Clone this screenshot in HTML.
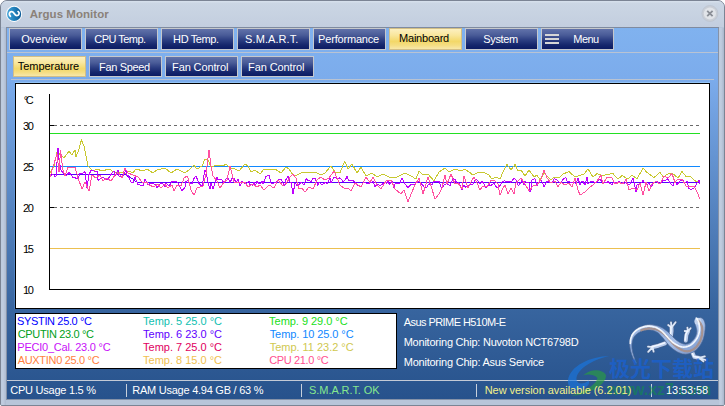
<!DOCTYPE html>
<html><head><meta charset="utf-8"><title>Argus Monitor</title>
<style>
html,body{margin:0;padding:0;background:#fff;}
body{width:725px;height:406px;overflow:hidden;position:relative;font-family:"Liberation Sans","Noto Sans CJK SC",sans-serif;font-size:11px;}
#win{position:absolute;left:0;top:0;width:723px;height:404px;border:1px solid #7b8494;border-radius:7px 7px 2px 2px;background:#b7c5d9;overflow:hidden;}
#title{position:absolute;left:0;top:0;width:723px;height:26px;background:linear-gradient(#d5dfeb 0,#d5dfeb 1px,#cbd6e4 2px,#c3cedf 26px);}
#tline{position:absolute;left:5px;top:26px;width:713px;height:1px;background:#7f8ba0;}
#client{position:absolute;left:6px;top:27px;width:711px;height:371px;background:linear-gradient(#80b2ef 0px,#7cacec 50px,#38659f 279px,#27528c 371px);}
#client:before{content:"";position:absolute;left:-1px;top:0;width:1px;height:372px;background:#8592a8;}
#client:after{content:"";position:absolute;left:711px;top:0;width:1px;height:372px;background:#8592a8;}
#fl{position:absolute;left:0;top:27px;width:5px;height:378px;background:linear-gradient(90deg,#bccadd,#c0cde0 40%,#aebbd0);}
#fr{position:absolute;left:718px;top:27px;width:5px;height:378px;background:linear-gradient(90deg,#bccadd,#c0cde0 40%,#aab7cc);}
#cbot{position:absolute;left:5px;top:398px;width:713px;height:1px;background:#8592a8;}
.sep{position:absolute;left:7px;width:711px;height:1px;background:#b9c3d3;}
.btn{position:absolute;width:71px;height:19px;border:1px solid #c6c8cc;background:linear-gradient(#6172aa 0%,#4a5c98 30%,#2c3e82 55%,#15266c 80%,#0b1b64 100%);}
.btn.tall{height:20px;}
.btn.act{background:linear-gradient(#fcf0c0 0%,#f9e79e 30%,#f3d868 62%,#f5de84 82%,#f8e8aa 100%);border-color:#d2be86;}
.hb{position:absolute;left:3px;top:5px;width:14px;height:2px;background:#d6d6d6;box-shadow:0 4px 0 #d6d6d6,0 8px 0 #d6d6d6;}
#chart{position:absolute;left:15px;top:83px;width:693px;height:224px;border:1px solid #000;background:#fff;box-shadow:0 -1px 0 rgba(165,215,255,.55),-1px 0 0 rgba(110,175,255,.3);}
#legend{position:absolute;left:15px;top:313px;width:380px;height:54px;border:1px solid #000;background:#fff;}
.t{position:absolute;line-height:13px;white-space:nowrap;}
.bar{position:absolute;top:384px;width:1px;height:13px;background:#c8d0dc;}
#wm{position:absolute;left:609px;top:354px;font-size:21px;font-weight:bold;color:rgba(24,98,215,.7);white-space:nowrap;line-height:26px;letter-spacing:0px;font-family:"Noto Sans CJK SC",sans-serif;}
#wm2{position:absolute;left:607px;top:382px;font-size:16px;font-weight:bold;color:rgba(12,150,64,.5);white-space:nowrap;line-height:16px;}
svg{position:absolute;left:0;top:0;}
</style></head><body>
<div id="win">
<div id="title"></div>
<div id="tline"></div>
<div id="client"></div>
<div id="fl"></div><div id="fr"></div>
<div id="cbot"></div>
</div>
<div class="sep" style="top:52px"></div>
<div class="sep" style="top:79px;left:11px;width:703px"></div>
<div class="sep" style="top:380px;background:#c3cad6"></div>
<div class="btn tall" style="left:9px;top:28px"></div>
<div class="btn tall" style="left:85px;top:28px"></div>
<div class="btn tall" style="left:161px;top:28px"></div>
<div class="btn tall" style="left:237px;top:28px"></div>
<div class="btn tall" style="left:313px;top:28px"></div>
<div class="btn tall act" style="left:389px;top:28px"></div>
<div class="btn tall" style="left:465px;top:28px"></div>
<div class="btn tall" style="left:541px;top:28px"><i class="hb"></i></div>

<div class="btn act" style="left:13px;top:56px"></div>
<div class="btn" style="left:89px;top:56px"></div>
<div class="btn" style="left:165px;top:56px"></div>
<div class="btn" style="left:241px;top:56px"></div>

<div id="chart"></div>
<div id="legend"></div>
<div class="bar" style="left:126px"></div>
<div class="bar" style="left:301px"></div>
<div class="bar" style="left:476px"></div>
<div class="bar" style="left:651px"></div>
<svg width="725" height="406" viewBox="0 0 725 406">
<defs>
<linearGradient id="ic" x1="0" y1="0" x2="1" y2="0"><stop offset="0" stop-color="#45a4d8"/><stop offset="0.5" stop-color="#2282bc"/><stop offset="1" stop-color="#0d5a96"/></linearGradient>
<linearGradient id="chrome" x1="0" y1="0" x2="1" y2="1"><stop offset="0" stop-color="#cfdcf0"/><stop offset="0.3" stop-color="#88a8dc"/><stop offset="0.55" stop-color="#a9c2ea"/><stop offset="0.8" stop-color="#7f9cd0"/><stop offset="1" stop-color="#b8c8e2"/></linearGradient>
</defs>
<!-- app icon -->
<circle cx="14.1" cy="13.9" r="8.05" fill="#fff"/>
<circle cx="14.1" cy="13.9" r="7.1" fill="url(#ic)"/>
<path d="M10.4 16.3 C8.4 14.8 9.3 11.5 11.9 11.7 C14.6 11.9 14.2 15.7 16.9 15.6 C19.5 15.5 19.7 12.6 18.1 11.6" fill="none" stroke="#fff" stroke-width="1.8" stroke-linecap="round"/>
<!-- close -->
<circle cx="709.9" cy="13.5" r="8" fill="#c9ced6" stroke="#bcc4d0" stroke-width="0.8"/>
<circle cx="709.9" cy="13.5" r="6.1" fill="#e1e4e9"/>
<path d="M707.2 10.8 L712.6 16.2 M712.6 10.8 L707.2 16.2" stroke="#8a8e96" stroke-width="1.8"/>
<!-- axes -->
<g shape-rendering="crispEdges">
<rect x="49" y="94" width="1" height="196" fill="#000"/>
<rect x="49" y="289" width="651" height="1" fill="#000"/>
<rect x="50" y="125" width="4" height="1" fill="#000"/>
<rect x="50" y="207" width="4" height="1" fill="#000"/>
<line x1="54" y1="125.5" x2="700" y2="125.5" stroke="#6a6a6a" stroke-dasharray="3 3"/>
<line x1="54" y1="207.5" x2="700" y2="207.5" stroke="#6a6a6a" stroke-dasharray="3 3"/>
<rect x="50" y="133" width="650" height="1" fill="#22e022"/>
<rect x="50" y="248" width="650" height="1" fill="#ecc050"/>
<rect x="50" y="166" width="650" height="1" fill="#1088ff"/>
</g>
<g shape-rendering="crispEdges" fill="none" stroke-width="1">
<polyline points="50,173 54,166 57,152 61,155 64,158 69,151 72,155 75,150 76,157 79,149 81.4,140 84,146 86,156 88,166 93,171 97,169 102,171 109,169 114,172 121,172 125,174 129,171 133,173 136,169 143,171 147,169 153,173 157,170 165,168 171,173 177,169 185,173 189,170 194,165 197,169 202,166 205,159 208,160 211,167 217,165 223,166 226,164 230,168 235,169 239,171 245,164 248,166 251,172 255,170 260,174 264,169 269,170 275,169 281,173 286,167 289,169 293,175 297,175 303,172 309,173 315,172 321,175 325,173 331,166 335,172 340,173 343,165 345,161.6 348,169 352,164 357,173 361,167 366,176 372,173 377,177 383,174 389,177 397,177 405,173 411,176 416,179 419,171 423,175 428,174 434,181 439,172 445,168 449,172 455,169 461,171 465,169 469,172 473,175 477,173 483,172 489,175 492,179 496,177 500,179 503,172 507,164.4 511,170 515,164.4 518,171 521,170 525,176 529,170 534,177 537,175 540,180 544,173 551,180 554,177 559,178 563,174 569,171.6 575,177 581,175 584,174 588,169 593,177 597,173.6 602,175.6 608,174.4 613,173.6 618,179 622,175.6 628,179 632,175 637,179 643,168 647,172.4 654,177.6 660,172 663,177 668,174 672,173 678,178 682,171.6 686,176.4 691,177 696,181.6 700,182.4" stroke="#c8c830"/>
<polyline points="50,174.4 125,174.4 127,176 129,176 131,178 133,179 135,181 138,182.4 700,182.4" stroke="#5a00ff"/>
<polyline points="50,173.7 51,175.5 52,175.3 53,173.7 55,176.8 56,176 58,148 59,160 61,170 62,171.4 65,174.9 67,175.2 69,171.9 71,175 73,177.3 75,177.6 77,179 78,178.6 80,172.9 82,173.9 85,171.7 87,188 89,174.5 91,170.6 92,170 94,171.2 97,171.4 98,180.3 101,178 104,177.9 107,179.5 109,177.4 111,174.4 114,171.1 115,176.4 118,169.9 119,176.4 122,176.7 124,174.2 126,169.6 127,175.7 128,175.4 131,181.9 133,182.5 135,177.2 138,184.5 139,184.6 141,185.5 143,185.8 145,179.1 148,185 151,183.1 153,183.6 155,184.2 157,188 159,185 161,183.2 163,184.1 165,186.9 166,183 169,186.3 172,181.3 175,181 178,182.6 179,185.2 182,190.5 184,188.4 185,187 186,181.3 188,180.6 189,183.3 192,183.5 194,178.5 196,176 199,183.5 202,186.4 205,170 206,172 208,182.3 210,189 211,183 213,188.8 215,182.8 217,177.2 218,179.7 220,179.4 222,180.1 224,182.9 226,179.1 228,178.1 230,182.5 232,178.5 234,178.4 235,180.5 236,182.4 238,179.5 240,186 242,181.6 244,183.1 247,183.3 249,181.2 250,184.5 253,185.2 254,182.2 255,186.2 257,181.5 260,184.2 262,181.3 263,184.1 266,176.5 269,174.9 271,183.1 273,183.3 276,182.7 278,179.9 281,179.1 283,182.9 284,185.3 285,184.8 286,179.4 288,176.4 290,182.1 291,182.3 293,194 295,183.1 297,185.4 298,185.6 301,182.4 304,184.9 306,178.7 308,180.4 311,181.5 313,178.6 315,178 317,182.9 318,185.4 319,182.2 322,185.1 323,184.1 325,182.5 327,183.6 330,178 331,183.1 334,176.9 336,177.9 338,178.6 340,177.8 343,181.5 345,180.4 347,176.5 349,180.8 350,180.6 353,180.7 355,182.1 358,185.7 359,185.5 361,187.1 363,182.9 365,182.6 368,183.9 370,183 373,181.5 375,186.9 377,183.9 380,185.6 383,183.6 385,182.2 387,183.2 388,181.2 389,184.4 392,181.4 393,185.2 394,188.1 395,184.2 396,183.1 398,183.4 400,183 402,177.8 405,184 408,187.8 410,185.3 412,184 415,184.7 416,182.1 417,182.6 419,181.5 420,181.9 421,183.5 423,185.6 425,188 427,186.8 428,185.3 430,183.4 432,184.4 434,181.5 437,181.7 439,181.5 441,186.7 442,188.3 444,185.2 447,183.6 450,185.7 453,178.5 455,179.3 457,183.5 459,182.6 462,189.8 464,184.9 465,187.3 467,186.2 470,184.5 473,184.2 475,179.9 476,179.1 479,181.9 480,184.1 482,181.5 484,183.8 486,188.2 488,185.9 490,184.8 491,185.5 494,182.9 496,186.4 497,188 499,187.2 502,182.1 504,180.9 506,181.1 508,181.1 511,182.2 514,178.2 516,180 518,184.9 519,185.3 522,179.9 524,185.1 525,181.1 527,182.5 529,182.8 530,192 531,190 532,180.1 535,178.7 537,185.6 538,183.8 539,182.9 540,179.6 542,181.7 544,186.5 547,181.5 550,182.1 552,182.7 554,178.9 555,179.1 557,179.7 559,182.2 561,182.4 562,181 564,178.2 566,177.9 567,181.2 569,181.5 572,183.1 573,182.4 576,183.4 578,178.4 580,184.6 581,182 583,181.5 585,185.3 587,177 588,183.7 591,181.1 594,182.1 597,182.3 600,178.9 603,183.3 605,181.8 607,183.1 608,181.6 611,184.2 612,184.7 613,182.7 615,182.5 618,183.4 619,181 621,184 622,182.9 624,183.4 626,182.8 628,184.6 630,183.9 633,178.5 634,182.2 636,192 637,185 640,184.7 642,182 643,180.6 645,183 647,185 649,183.3 651,187 654,183 657,180.8 658,182.5 660,183.8 663,180.2 665,180.6 668,178.8 670,182.4 671,183.9 673,186 675,180.6 677,185.2 678,183.5 681,180.2 683,179.8 684,183 687,181.5 689,188.7 691,189.6 694,188.3 697,183.1 699,180.5 700,183.5" stroke="#c000ff"/>
<polyline points="50,177 57,154 59,172 60.6,150 62.6,169 65,176 68,167 75,167 78,178 82,189 85,182 89,191 92,175 96,178 100,175 103,181 107,178 111,181 115,175 119,173 122,178 125,168 128,173 133,175 138,177 142,182 147,182.4 149,185 154,187 158,184 161,188 165,184 168,188 172,185 174,191 177,185 181,186 184,178 187,176 188,178 191,190 194,195 197,188 203,186 206,174 209,150 211,166 213,176 217,181 220,188 224,182 227,180 230,166 234,182 239,182.4 245,182.4 248,187 253,184 257,187 260,185 264,190 269,185 274,188 278,180 283,186 287,182.4 290,177 293,174 296,178 299,189 302,188 305,192 309,187 313,189 317,180 321,177 325,180 329,178 334,171 337,178 340,185 345,189 348,188 351,191 355,183 361,187 366,177 370,182.4 373,177 377,185 381,189 386,181 391,180 395,189 401,194 404,190 408,202 411,194 415,185 419,178 423,194 428,177 431,186 435,199 439,194 442,188 445,175 447,184 451,174 455,184 458,183 462,189 464,176 468,188 471,182 474,177 477,183 480,190 483,186 487,187 491,180 495,181 498,184 500,195 503,188 505,185 508,194 511,188 514,194 516,183 521,178 525,184 529,191 533,186 537,185 541,179 544,170 547,178 551,183 555,181 558,187 561,182 565,185 569,183 572,187 575,178 578,190 580,195 585,192 589,188 593,185 597,181 601,175 603,184 607,177 612,178 615,184 619,182.4 623,184 626,179 629,190 633,188 637,190 640,183 643,195 646,182.4 649,191 652,184 656,181.6 660,184 664,176 668,178 672,173.6 675,182.4 678,179 682,179 686,186 690,187 694,186 697,192 700,199" stroke="#ff50a0"/>
</g>
<!-- lizard -->
<g stroke-linecap="round" stroke-linejoin="round" fill="none">
<g stroke="#47608a" stroke-width="5"><path d="M671 336 L671.6 331 L671.5 327.6"/><path d="M685.8 340.6 L686.4 335 L688 331.4"/><path d="M665 343.4 L658.2 345.8 L652.6 347.2"/><path d="M692.2 352 L694.4 357 L699 357.9"/></g>
<g stroke="#47608a" stroke-width="2.8"><path d="M671.5 327.6 L668.2 325 M671.5 327.6 L671 322.4 M671.5 327.6 L675.6 322.2"/><path d="M688 331.4 L684.8 331 M688 331.4 L687.4 327.6 M688 331.4 L690.6 328.2"/><path d="M652.6 347.2 L648 346.6 M652.6 347.2 L648.2 351.8 M652.6 347.2 L653.6 351.6"/><path d="M699 357.9 L704.8 356.4 M699 357.9 L705.6 360 M699 357.9 L703.4 361.4"/></g>
<g stroke="#b9cdee" stroke-width="3.8"><path d="M671 336 L671.6 331 L671.5 327.6"/><path d="M685.8 340.6 L686.4 335 L688 331.4"/><path d="M665 343.4 L658.2 345.8 L652.6 347.2"/><path d="M692.2 352 L694.4 357 L699 357.9"/></g>
<g stroke="#dbe7f8" stroke-width="1.8"><path d="M671.5 327.6 L668.2 325 M671.5 327.6 L671 322.4 M671.5 327.6 L675.6 322.2"/><path d="M688 331.4 L684.8 331 M688 331.4 L687.4 327.6 M688 331.4 L690.6 328.2"/><path d="M652.6 347.2 L648 346.6 M652.6 347.2 L648.2 351.8 M652.6 347.2 L653.6 351.6"/><path d="M699 357.9 L704.8 356.4 M699 357.9 L705.6 360 M699 357.9 L703.4 361.4"/></g>
<g stroke="#f2f7ff" stroke-width="1.6"><path d="M671 336 L671.6 331 L671.5 327.6" transform="translate(-0.6,-0.5)"/><path d="M685.8 340.6 L686.4 335 L688 331.4" transform="translate(-0.6,-0.5)"/><path d="M665 343.4 L658.2 345.8 L652.6 347.2" transform="translate(-0.6,-0.5)"/><path d="M692.2 352 L694.4 357 L699 357.9" transform="translate(-0.6,-0.5)"/></g>
</g>
<path d="M636.6 363.1 L636.3 362.5 L636.0 361.7 L635.6 360.8 L635.1 359.8 L634.7 358.7 L634.4 357.8 L634.0 356.8 L633.7 355.8 L633.4 354.8 L633.1 353.8 L632.8 352.8 L632.6 351.8 L632.4 350.8 L632.3 349.8 L632.1 348.8 L632.0 347.9 L632.0 346.9 L631.9 345.9 L632.0 345.0 L632.0 344.0 L632.1 343.0 L632.3 342.1 L632.4 341.2 L632.7 340.3 L632.9 339.5 L633.2 338.7 L633.5 338.0 L633.9 337.3 L634.3 336.6 L634.8 336.0 L635.3 335.4 L635.9 334.8 L636.5 334.2 L637.2 333.7 L637.8 333.2 L638.5 332.8 L639.2 332.4 L640.0 332.0 L640.7 331.6 L641.6 331.3 L642.4 331.0 L643.3 330.8 L644.1 330.5 L645.0 330.3 L646.0 330.2 L646.9 330.0 L647.8 330.0 L648.6 329.9 L649.5 330.0 L650.3 330.1 L651.2 330.2 L652.1 330.3 L652.9 330.6 L653.8 330.8 L654.6 331.1 L655.4 331.4 L656.1 331.8 L656.9 332.2 L657.6 332.6 L658.3 333.1 L658.9 333.6 L659.6 334.2 L660.2 334.9 L660.9 335.7 L661.6 336.4 L662.3 337.2 L663.0 338.0 L663.6 338.7 L664.2 339.6 L664.9 340.5 L665.7 341.4 L666.4 342.4 L667.1 343.2 L667.8 344.0 L668.6 344.9 L669.3 345.7 L670.2 346.6 L671.1 347.5 L672.1 348.3 L673.0 349.1 L674.1 349.8 L675.2 350.6 L676.3 351.3 L677.5 352.0 L678.6 352.5 L679.8 353.0 L681.1 353.5 L682.5 353.9 L684.0 354.1 L685.5 354.2 L687.1 354.1 L688.6 353.8 L690.0 353.4 L691.3 352.9 L692.6 352.4 L693.8 351.7 L695.0 350.9 L696.1 350.1 L697.1 349.2 L697.9 348.2 L698.7 347.3 L699.5 346.3 L700.2 345.3 L700.9 344.2 L701.5 343.1 L702.1 341.9 L702.6 340.8 L703.1 339.6 L703.5 338.4 L703.8 337.2 L704.1 336.0 L704.4 334.8 L704.6 333.6 L704.8 332.4 L704.9 331.1 L705.1 329.9 L705.2 328.6 L705.2 327.5 L705.3 326.4 L705.3 325.4 L705.2 324.4 L705.0 323.4 L704.8 322.5 L704.6 321.8 L704.3 321.2 L704.1 320.6 L703.7 319.9 L703.3 319.3 L702.8 318.8 L702.4 318.4 L702.1 318.2 L701.9 318.1 L701.5 317.9 L701.1 317.7 L700.7 317.6 L700.3 317.5 L700.1 317.5 L699.9 317.5 L694.9 321.7 L695.0 321.9 L695.0 322.2 L694.9 322.6 L694.9 322.9 L694.9 323.2 L694.9 323.5 L695.0 323.9 L695.2 324.2 L695.2 324.4 L695.2 324.5 L695.1 324.5 L695.1 324.6 L695.2 324.9 L695.4 325.3 L695.5 325.5 L695.7 325.8 L695.8 326.2 L695.9 326.6 L696.1 327.3 L696.3 328.2 L696.5 329.0 L696.7 329.9 L696.8 330.8 L696.8 331.6 L696.7 332.4 L696.6 333.2 L696.4 334.1 L696.1 334.9 L695.9 335.7 L695.5 336.4 L695.1 337.2 L694.7 337.9 L694.2 338.7 L693.6 339.4 L693.1 340.0 L692.5 340.7 L691.9 341.3 L691.3 341.8 L690.8 342.3 L690.2 342.7 L689.7 343.0 L689.2 343.3 L688.6 343.5 L687.9 343.8 L687.2 344.0 L686.5 344.1 L685.9 344.2 L685.5 344.2 L685.0 344.2 L684.5 344.1 L683.8 344.0 L683.1 343.8 L682.3 343.5 L681.5 343.2 L680.8 342.9 L680.0 342.6 L679.2 342.1 L678.4 341.6 L677.6 341.1 L676.9 340.5 L676.2 340.0 L675.5 339.4 L674.8 338.8 L674.1 338.1 L673.4 337.4 L672.6 336.6 L671.8 335.9 L671.1 335.2 L670.3 334.4 L669.5 333.5 L668.6 332.6 L667.7 331.8 L666.8 331.0 L665.8 330.3 L664.9 329.5 L663.9 328.8 L662.8 328.1 L661.7 327.5 L660.7 327.0 L659.6 326.5 L658.5 326.1 L657.4 325.7 L656.3 325.4 L655.2 325.2 L654.1 325.0 L653.0 324.8 L651.9 324.7 L650.7 324.6 L649.6 324.6 L648.4 324.7 L647.2 324.8 L646.1 325.0 L644.9 325.2 L643.8 325.5 L642.8 325.9 L641.7 326.2 L640.8 326.6 L639.8 327.0 L638.8 327.5 L637.9 328.0 L636.9 328.6 L636.1 329.2 L635.2 329.9 L634.5 330.7 L633.7 331.4 L633.0 332.3 L632.4 333.1 L631.8 334.0 L631.3 334.9 L630.9 335.8 L630.5 336.7 L630.2 337.7 L629.9 338.7 L629.7 339.7 L629.6 340.7 L629.5 341.8 L629.5 342.9 L629.5 343.9 L629.6 345.0 L629.7 346.1 L629.8 347.1 L630.0 348.1 L630.2 349.2 L630.4 350.2 L630.7 351.2 L631.0 352.2 L631.3 353.2 L631.6 354.3 L632.0 355.3 L632.4 356.3 L632.8 357.3 L633.2 358.2 L633.7 359.2 L634.2 360.2 L634.8 361.2 L635.3 362.1 L635.7 362.8 L636.0 363.3 Z" fill="url(#chrome)" stroke="#4e6690" stroke-width="0.7" stroke-linejoin="round"/>
<circle cx="697.9" cy="321.2" r="3.5" fill="#c4d4ee"/>
<path d="M641.4 330.2 L642.4 329.8 L643.3 329.5 L644.3 329.2 L645.3 329.0 L646.3 328.8 L647.3 328.6 L648.4 328.5 L649.4 328.4 L650.4 328.4 L651.4 328.5 L652.5 328.6 L653.5 328.8 L654.5 329.0 L655.5 329.2 L656.4 329.5 L657.4 329.8 L658.3 330.2 L659.3 330.7 L660.2 331.1 L661.1 331.7 L662.0 332.3 L662.9 333.0 L663.8 333.7 L664.6 334.5 L665.4 335.3 L666.3 336.1 L667.1 336.9 L667.9 337.8 L668.6 338.7 L669.4 339.6 L670.1 340.4 L670.9 341.3 L671.7 342.1 L672.4 342.9 L673.1 343.7 L673.9 344.4 L674.7 345.2 L675.5 345.9 L676.4 346.6 L677.3 347.3 L678.2 347.9 L679.2 348.6 L680.1 349.1 L681.1 349.6 L682.1 350.1 L683.1 350.5 L684.1 350.8 L685.1 351.1 L686.2 351.2 L687.2 351.3 L688.2 351.2 L689.2 351.1 L690.2 350.8 L691.2 350.4 L692.2 350.0 L693.1 349.5 L693.9 349.0 L694.7 348.4 L695.5 347.7 L696.2 347.0 L696.9 346.2 L697.5 345.4 L698.1 344.5 L698.7 343.6 L699.3 342.7 L699.8 341.7 L700.3 340.7 L700.7 339.7 L701.0 338.7 L701.3 337.7 L701.6 336.7 L701.8 335.7 L702.0 334.7 L702.1 333.7 L702.2 332.7 L702.3 331.7 L702.3 330.7 L702.3 329.7 L702.2 328.8 L702.2 328.0 L702.1 327.3 L702.0 326.6 L701.8 326.1 L701.6 325.6 L701.4 325.1 L701.2 324.7 L701.0 324.2 L700.8 323.9 L700.6 323.6 L700.3 323.3 L700.1 323.0 L699.9 322.7 L699.6 322.3 L699.4 322.0 L699.1 321.7 L698.8 321.4 L698.6 321.1 L698.5 321.0" fill="none" stroke="#a98e84" stroke-width="2.3" opacity="0.85" stroke-linecap="round"/>
<path d="M630.3 343.4 L630.4 342.4 L630.4 341.3 L630.5 340.3 L630.7 339.4 L630.9 338.4 L631.2 337.5 L631.5 336.7 L631.8 335.8 L632.2 335.0 L632.7 334.2 L633.2 333.5 L633.8 332.7 L634.4 332.0 L635.1 331.3 L635.8 330.7 L636.6 330.1 L637.4 329.6 L638.2 329.1 L639.0 328.6 L639.9 328.2 L640.8 327.8 L641.7 327.5 L642.6 327.2 L643.6 326.9 L644.6 326.6 L645.6 326.4 L646.6 326.3 L647.6 326.2 L648.6 326.2 L649.6 326.2 L650.6 326.3 L651.6 326.4 L652.6 326.6 L653.5 326.8 L654.5 327.0 L655.4 327.3 L656.3 327.6 L657.2 328.0 L658.0 328.4 L658.9 328.9 L659.7 329.5 L660.6 330.1 L661.4 330.7 L662.2 331.4 L663.0 332.2 L663.7 332.9 L664.5 333.7 L665.2 334.5 L665.9 335.3 L666.7 336.1 L667.4 336.9 L668.1 337.7 L668.8 338.5 L669.5 339.3 L670.2 340.0 L671.0 340.7 L671.7 341.4 L672.5 342.1 L673.3 342.8 L674.2 343.4 L675.1 344.0 L676.0 344.6 L677.0 345.1 L677.9 345.6 L678.8 346.0 L679.8 346.3 L680.8 346.7 L681.8 346.9 L682.8 347.0 L683.8 347.1 L684.8 347.0 L685.9 346.9 L686.9 346.6 L688.0 346.3 L689.0 345.9 L689.9 345.5 L690.8 345.0 L691.6 344.4 L692.4 343.8 L693.1 343.1 L693.8 342.4 L694.5 341.6 L695.2 340.8 L695.8 340.0 L696.4 339.1 L697.0 338.2 L697.5 337.2 L697.9 336.3 L698.3 335.3 L698.7 334.3 L698.9 333.4 L699.2 332.3 L699.3 331.3 L699.5 330.3 L699.5 329.3 L699.5 328.1 L699.4 327.0 L699.3 325.9 L699.2 324.9 L699.0 324.0 L698.9 323.3 L698.7 322.6 L698.5 322.0 L698.3 321.5 L698.1 321.0 L698.0 320.5 L697.8 320.2 L697.6 319.8 L697.4 319.6 L697.2 319.3 L697.1 319.1 L696.9 318.9 L696.8 318.8 L696.7 318.6 L696.6 318.5 L696.5 318.4 L696.4 318.3 L696.3 318.2" fill="none" stroke="#f6faff" stroke-width="1.7" opacity="0.95" stroke-linecap="round"/>
<!-- watermark logo -->
<g opacity="0.62">
<path d="M609.5 356 C590 356.5 570 366 568 380 C567 388 574 391.5 582 389 C588 387 590.5 383 588.5 380.5 C584.5 384.5 577 385 576.5 379.5 C576 370 591 360 609.5 356 Z" fill="#1878e4"/>
<path d="M583 375.5 C590 369 602 368.5 606 375 C606.5 384 592 394 571 396 C586 391 596.5 384 597.5 378 C593.5 374 587 374 583 375.5 Z" fill="#2aa23c"/>
</g>
</svg>
<div id="wm2">www.xz7.com</div>
<div class="t" style="left:29.70px;top:8px;color:#8a8179;letter-spacing:0.042px;font-weight:bold;font-size:11.5px;">Argus Monitor</div>
<div class="t" style="left:21.30px;top:33px;color:#fff;letter-spacing:-0.014px;">Overview</div>
<div class="t" style="left:94.30px;top:33px;color:#fff;letter-spacing:-0.522px;">CPU Temp.</div>
<div class="t" style="left:173.10px;top:33px;color:#fff;letter-spacing:-0.377px;">HD Temp.</div>
<div class="t" style="left:245.10px;top:33px;color:#fff;letter-spacing:0.077px;">S.M.A.R.T.</div>
<div class="t" style="left:318.10px;top:33px;color:#fff;letter-spacing:-0.185px;">Performance</div>
<div class="t" style="left:399.10px;top:32px;color:#000;letter-spacing:-0.232px;">Mainboard</div>
<div class="t" style="left:483.30px;top:33px;color:#fff;letter-spacing:-0.342px;">System</div>
<div class="t" style="left:573.30px;top:33px;color:#fff;letter-spacing:-0.533px;">Menu</div>
<div class="t" style="left:17.70px;top:60px;color:#000;letter-spacing:-0.023px;">Temperature</div>
<div class="t" style="left:99.10px;top:61px;color:#fff;letter-spacing:-0.338px;">Fan Speed</div>
<div class="t" style="left:172.10px;top:61px;color:#fff;letter-spacing:-0.123px;">Fan Control</div>
<div class="t" style="left:248.10px;top:61px;color:#fff;letter-spacing:-0.103px;">Fan Control</div>
<div class="t" style="left:23.70px;top:94px;color:#000;letter-spacing:-2.399px;">°C</div>
<div class="t" style="left:22.90px;top:120px;color:#000;letter-spacing:-1.318px;">30</div>
<div class="t" style="left:22.90px;top:161px;color:#000;letter-spacing:-1.318px;">25</div>
<div class="t" style="left:22.90px;top:202px;color:#000;letter-spacing:-1.318px;">20</div>
<div class="t" style="left:22.90px;top:243px;color:#000;letter-spacing:-1.318px;">15</div>
<div class="t" style="left:22.90px;top:284px;color:#000;letter-spacing:-1.318px;">10</div>
<div class="t" style="left:17.10px;top:315px;color:#0000ff;letter-spacing:-0.358px;">SYSTIN 25.0 °C</div>
<div class="t" style="left:17.70px;top:328px;color:#00a020;letter-spacing:-0.343px;">CPUTIN 23.0 °C</div>
<div class="t" style="left:17.30px;top:341px;color:#c810f8;letter-spacing:-0.235px;">PECI0_Cal. 23.0 °C</div>
<div class="t" style="left:17.70px;top:354px;color:#ff8040;letter-spacing:-0.312px;">AUXTIN0 25.0 °C</div>
<div class="t" style="left:143.10px;top:315px;color:#10c0b0;letter-spacing:-0.003px;">Temp. 5 25.0 °C</div>
<div class="t" style="left:143.10px;top:328px;color:#6000ff;letter-spacing:-0.003px;">Temp. 6 23.0 °C</div>
<div class="t" style="left:143.10px;top:341px;color:#e00060;letter-spacing:-0.003px;">Temp. 7 25.0 °C</div>
<div class="t" style="left:143.10px;top:354px;color:#f0c050;letter-spacing:-0.003px;">Temp. 8 15.0 °C</div>
<div class="t" style="left:269.10px;top:315px;color:#20e020;letter-spacing:-0.032px;">Temp. 9 29.0 °C</div>
<div class="t" style="left:269.70px;top:328px;color:#1088ff;letter-spacing:-0.078px;">Temp. 10 25.0 °C</div>
<div class="t" style="left:269.70px;top:341px;color:#d0c850;letter-spacing:-0.023px;">Temp. 11 23.2 °C</div>
<div class="t" style="left:269.30px;top:354px;color:#ff5090;letter-spacing:-0.375px;">CPU 21.0 °C</div>
<div class="t" style="left:403.70px;top:316px;color:#fff;letter-spacing:-0.560px;">Asus PRIME H510M-E</div>
<div class="t" style="left:403.70px;top:336px;color:#fff;letter-spacing:-0.227px;">Monitoring Chip: Nuvoton NCT6798D</div>
<div class="t" style="left:403.70px;top:356px;color:#fff;letter-spacing:-0.222px;">Monitoring Chip: Asus Service</div>
<div class="t" style="left:10.30px;top:384px;color:#fff;letter-spacing:-0.249px;">CPU Usage 1.5 %</div>
<div class="t" style="left:132.30px;top:384px;color:#fff;letter-spacing:-0.251px;">RAM Usage 4.94 GB / 63 %</div>
<div class="t" style="left:309.10px;top:384px;color:#86e88e;letter-spacing:-0.081px;">S.M.A.R.T. OK</div>
<div class="t" style="left:484.70px;top:384px;color:#f2f08a;letter-spacing:-0.045px;">New version available (6.2.01)</div>
<div class="t" style="left:666.10px;top:384px;color:#fff;letter-spacing:-0.100px;">13:53:58</div>

<div id="wm">极光下载站</div>
</body></html>
